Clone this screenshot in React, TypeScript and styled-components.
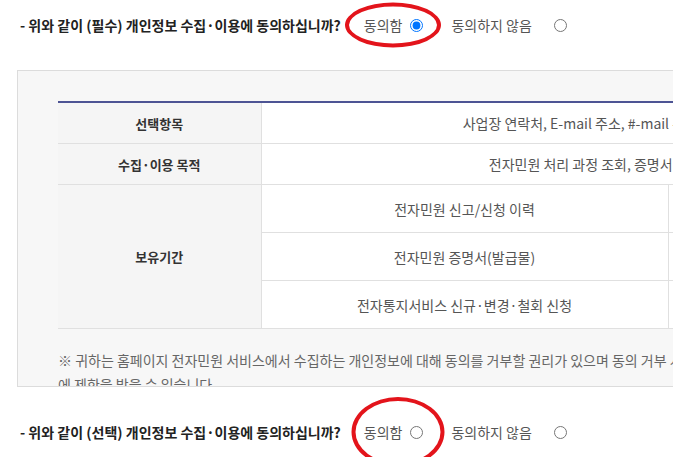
import React from "react"
import styled, { createGlobalStyle } from "styled-components"

const GlobalStyle = createGlobalStyle`
  html, body {
    margin: 0;
    padding: 0;
    background: #fff;
    overflow: hidden;
  }
  body {
    font-family: "Noto Sans CJK KR", "Noto Sans", sans-serif;
    color: #333;
  }
`

const Page = styled.div`
  width: 1240px;
  padding-left: 17px;
`

const Question = styled.div<{ $top?: number }>`
  display: flex;
  align-items: center;
  height: 50px;
  margin-top: ${ p => p.$top || 0 }px;
  padding-left: 3px;
`

const QuestionText = styled.strong`
  font-size: 14px;
  font-weight: 700;
  color: #222;
  margin-right: 23px;
`

const Option = styled.label<{ $after: number }>`
  position: relative;
  display: inline-flex;
  align-items: center;
  margin-right: ${ p => p.$after }px;
  font-size: 14px;
  color: #555;
`

const OptionText = styled.span<{ $gap: number }>`
  margin-right: ${ p => p.$gap }px;
`

const Radio = styled.input`
  width: 13px;
  height: 13px;
  margin: 0;
`

const Ring = styled.span<{ $w: number, $h: number, $dx: number }>`
  position: absolute;
  left: 50%;
  top: 50%;
  width: ${ p => p.$w }px;
  height: ${ p => p.$h }px;
  transform: translate(calc(-50% + ${ p => p.$dx }px), -50%);
  border: 4px solid #e3141b;
  border-radius: 50%;
  box-sizing: border-box;
  pointer-events: none;
`

const Box = styled.div`
  margin-top: 20px;
  height: 317px;
  box-sizing: border-box;
  overflow: hidden;
  border: 1px solid #dcdcdc;
  background: #f7f7f7;
  padding: 30px 0 0 40px;
`

const Table = styled.table`
  width: 1010px;
  border-collapse: collapse;
  border-top: 2px solid #4d5494;
  border-bottom: 1px solid #a8a8a8;
  table-layout: fixed;
`

const Th = styled.th`
  background: #f5f5f5;
  color: #333;
  font-size: 13px;
  font-weight: 700;
  border-bottom: 1px solid #e0e0e0;
  border-right: 1px solid #e0e0e0;
`

const Td = styled.td<{ $h: number }>`
  height: ${ p => p.$h }px;
  padding: 0;
  background: #fff;
  color: #555;
  font-size: 14px;
  text-align: center;
  white-space: nowrap;
  border-bottom: 1px solid #e0e0e0;
  border-right: 1px solid #e0e0e0;
`

const Note = styled.p`
  width: 762px;
  margin: 19px 0 0;
  font-size: 14px;
  line-height: 24px;
  color: #666;
`

type OptionsProps = { name: string, checked?: boolean, ring: { w: number, h: number, dx: number } }

const Options = ({ name, checked, ring }: OptionsProps) => (
  <>
    <Option $after={ 28 }>
      <OptionText $gap={ 8 }>동의함</OptionText>
      <Radio type="radio" name={ name } defaultChecked={ checked } />
      <Ring $w={ ring.w } $h={ ring.h } $dx={ ring.dx } />
    </Option>
    <Option $after={ 0 }>
      <OptionText $gap={ 22 }>동의하지 않음</OptionText>
      <Radio type="radio" name={ name } />
    </Option>
  </>
)

const periods = [
  ["전자민원 신고/신청 이력", "5년"],
  ["전자민원 증명서(발급물)", "5년"],
  ["전자통지서비스 신규·변경·철회 신청", "5년"]
]

const App = () => (
  <>
    <GlobalStyle />
    <Page>
      <Question>
        <QuestionText>- 위와 같이 (필수) 개인정보 수집·이용에 동의하십니까?</QuestionText>
        <Options name="req" checked ring={ { w: 96, h: 45, dx: -1 } } />
      </Question>
      <Box>
        <Table>
          <colgroup>
            <col style={ { width: 203 } } />
            <col style={ { width: 407 } } />
            <col />
          </colgroup>
          <tbody>
            <tr>
              <Th>선택항목</Th>
              <Td $h={ 40 } colSpan={ 2 }>사업장 연락처, E-mail 주소, #-mail 주소, 전자통지 수신 휴대전화번호</Td>
            </tr>
            <tr>
              <Th>수집·이용 목적</Th>
              <Td $h={ 40 } colSpan={ 2 }>전자민원 처리 과정 조회, 증명서 발급 및 전자통지서비스 제공</Td>
            </tr>
            { periods.map(([label, term], i) => (
              <tr key={ label }>
                { i === 0 && <Th rowSpan={ 3 }>보유기간</Th> }
                <Td $h={ 47 }>{ label }</Td>
                <Td $h={ 47 }>{ term }</Td>
              </tr>
            )) }
          </tbody>
        </Table>
        <Note>
          ※ 귀하는 홈페이지 전자민원 서비스에서 수집하는 개인정보에 대해 동의를 거부할 권리가 있으며 동의 거부 시 전자민원 서비스 이용에 제한을 받을 수 있습니다.
        </Note>
      </Box>
      <Question $top={ 20 }>
        <QuestionText>- 위와 같이 (선택) 개인정보 수집·이용에 동의하십니까?</QuestionText>
        <Options name="opt" ring={ { w: 93, h: 70, dx: 4 } } />
      </Question>
    </Page>
  </>
)

export default App
